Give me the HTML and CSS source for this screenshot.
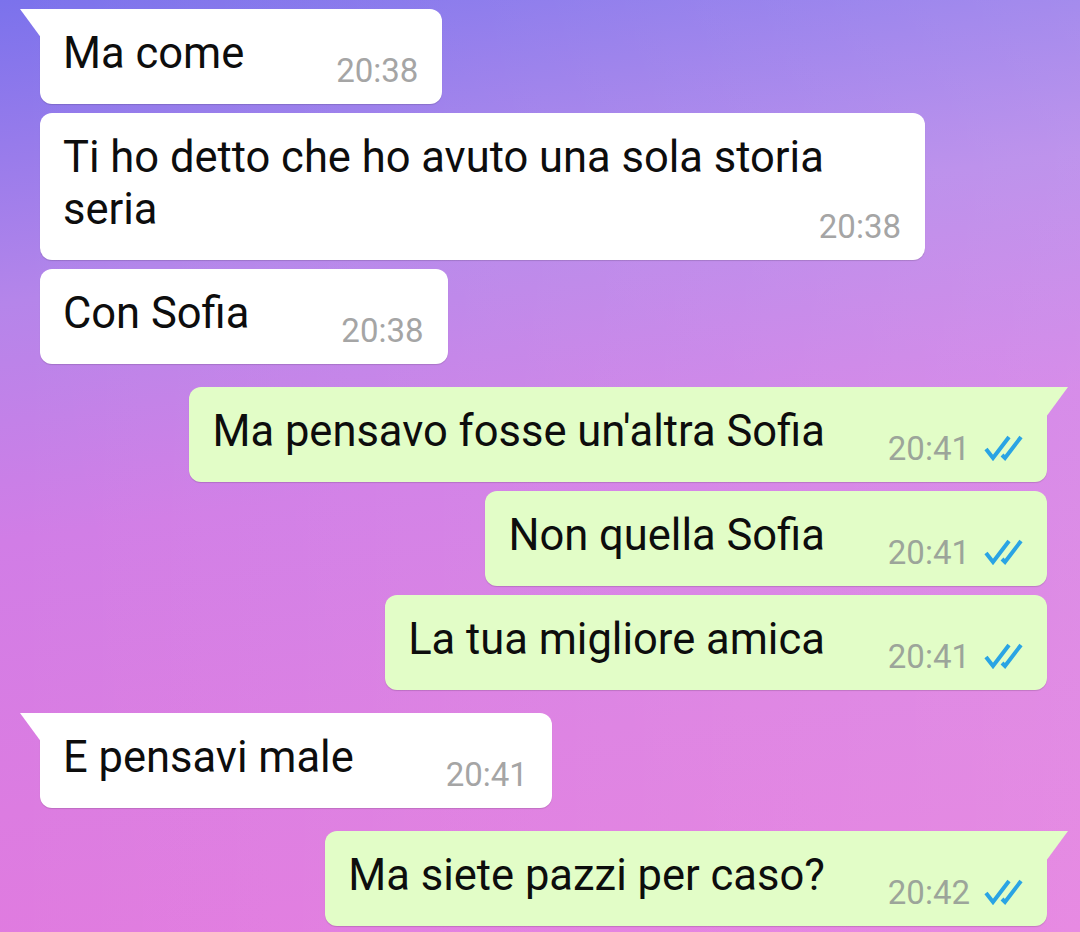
FILE: index.html
```html
<!DOCTYPE html>
<html lang="it">
<head>
    <meta charset="UTF-8">
    <meta name="viewport" content="width=device-width, initial-scale=1.0">
    <title>Chat</title>
    <link rel="stylesheet" href="styles.css">
</head>
<body>

    <div class="chat">
        <div class="msg in tail">
            Ma come<span class="meta"><span class="time">20:38</span></span>
        </div>
        <div class="msg in">
            Ti ho detto che ho avuto una sola storia seria<span class="meta"><span class="time">20:38</span></span>
        </div>
        <div class="msg in">
            Con Sofia<span class="meta"><span class="time">20:38</span></span>
        </div>

        <div class="msg out tail">
            Ma pensavo fosse un'altra Sofia<span class="meta"><span class="time">20:41</span><svg class="ticks" viewBox="0 0 40 30"><path d="M3 17 L10 26 L26 5 M19 23 L22 26 L38 5"/></svg></span>
        </div>
        <div class="msg out">
            Non quella Sofia<span class="meta"><span class="time">20:41</span><svg class="ticks" viewBox="0 0 40 30"><path d="M3 17 L10 26 L26 5 M19 23 L22 26 L38 5"/></svg></span>
        </div>
        <div class="msg out">
            La tua migliore amica<span class="meta"><span class="time">20:41</span><svg class="ticks" viewBox="0 0 40 30"><path d="M3 17 L10 26 L26 5 M19 23 L22 26 L38 5"/></svg></span>
        </div>

        <div class="msg in tail">
            E pensavi male<span class="meta"><span class="time">20:41</span></span>
        </div>

        <div class="msg out tail">
            Ma siete pazzi per caso?<span class="meta"><span class="time">20:42</span><svg class="ticks" viewBox="0 0 40 30"><path d="M3 17 L10 26 L26 5 M19 23 L22 26 L38 5"/></svg></span>
        </div>
    </div>

</body>
</html>
```

FILE: styles.css
```css
/* Global Styles */
* {
    margin: 0;
    padding: 0;
    box-sizing: border-box;
}

body {
    width: 1080px;
    height: 932px;
    overflow: hidden;
    font-family: Roboto, "Noto Sans", sans-serif;
    color: #0d0d0d;
    background:
        linear-gradient(to right, rgba(255, 255, 255, 0), rgba(255, 255, 255, 0.12)),
        linear-gradient(172deg, #7b72ec 0%, #b585ea 28%, #d17de6 50%, #dc7ce1 75%, #e47ade 100%);
}

.chat {
    display: flex;
    flex-direction: column;
    align-items: flex-start;
    padding: 9px 33px 0 40px;
}

/* Bubbles */
.msg {
    position: relative;
    display: flow-root;
    max-width: 885px;
    padding: 19px 24px 17px 23px;
    font-size: 43.5px;
    line-height: 52px;
    border-radius: 12px;
    box-shadow: 0 1px 1px rgba(0, 0, 0, 0.14);
    margin-top: 9px;
}

.msg:first-child {
    margin-top: 0;
}

.msg.in {
    background-color: #fff;
}

.msg.out {
    align-self: flex-end;
    background-color: #e2fdc7;
}

.in + .out,
.out + .in {
    margin-top: 23px;
}

/* Tails */
.msg.tail::before {
    content: '';
    position: absolute;
    top: 0;
    width: 22px;
    height: 30px;
    background-color: inherit;
}

.in.tail {
    border-top-left-radius: 0;
}

.in.tail::before {
    left: -20px;
    clip-path: polygon(0 0, 100% 0, 100% 100%);
}

.out.tail {
    border-top-right-radius: 0;
}

.out.tail::before {
    right: -21px;
    clip-path: polygon(0 0, 100% 0, 0 100%);
}

/* Time and ticks */
.meta {
    float: right;
    display: flex;
    align-items: center;
    margin: 26px 0 0 92px;
    font-size: 33px;
    line-height: 33px;
    color: #a5a5a5;
}

.out .meta {
    margin-left: 63px;
    color: #9ca59a;
}

.ticks {
    width: 40px;
    height: 30px;
    margin-left: 13px;
    margin-top: -4px;
    fill: none;
    stroke: #2aa4e4;
    stroke-width: 4;
}
```
